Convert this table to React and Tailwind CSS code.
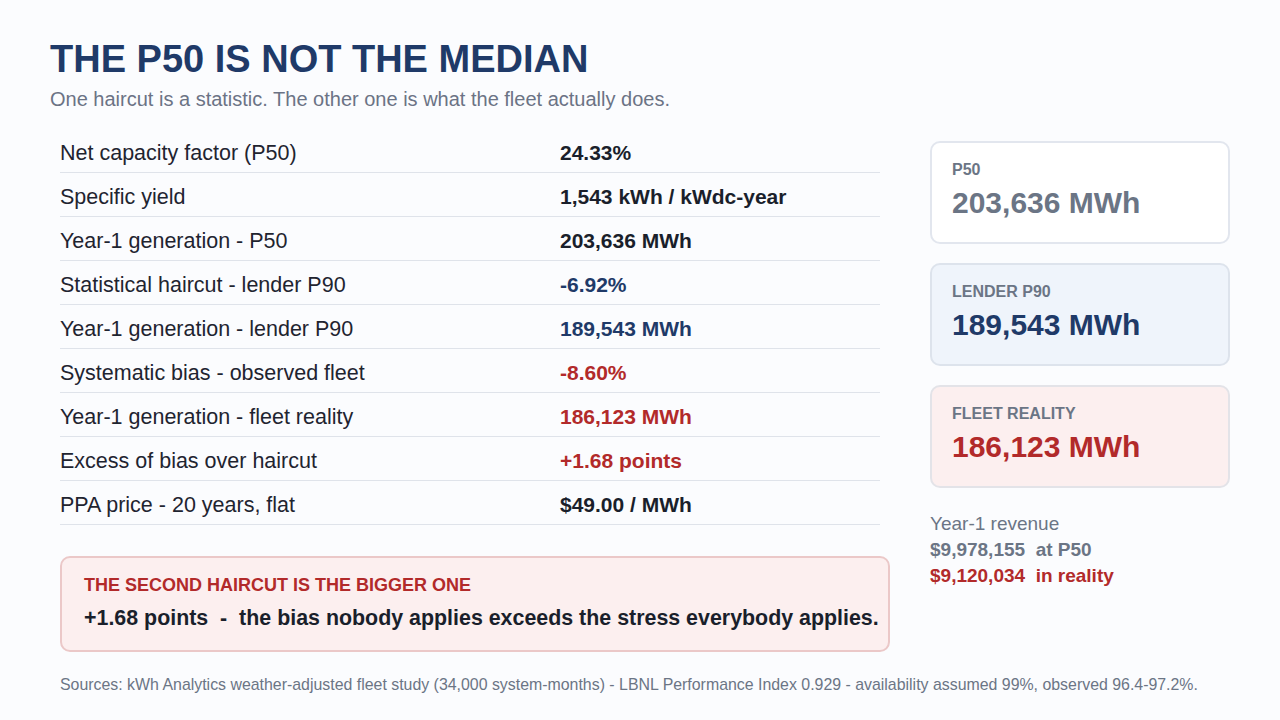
import React from 'react';

const rows = [
  { label: 'Net capacity factor (P50)', value: '24.33%', tone: 'dark' },
  { label: 'Specific yield', value: '1,543 kWh / kWdc-year', tone: 'dark' },
  { label: 'Year-1 generation - P50', value: '203,636 MWh', tone: 'dark' },
  { label: 'Statistical haircut - lender P90', value: '-6.92%', tone: 'navy' },
  { label: 'Year-1 generation - lender P90', value: '189,543 MWh', tone: 'navy' },
  { label: 'Systematic bias - observed fleet', value: '-8.60%', tone: 'red' },
  { label: 'Year-1 generation - fleet reality', value: '186,123 MWh', tone: 'red' },
  { label: 'Excess of bias over haircut', value: '+1.68 points', tone: 'red' },
  { label: 'PPA price - 20 years, flat', value: '$49.00 / MWh', tone: 'dark' },
];

const toneClass = {
  dark: 'text-[#1a1f2b]',
  navy: 'text-[#1f3a68]',
  red: 'text-[#b22a2a]',
};

const cards = [
  { label: 'P50', value: '203,636 MWh', box: 'bg-white border-[#e2e6ee]', text: 'text-[#6b7585]' },
  { label: 'LENDER P90', value: '189,543 MWh', box: 'bg-[#eff4fb] border-[#dde3ec]', text: 'text-[#1f3a68]' },
  { label: 'FLEET REALITY', value: '186,123 MWh', box: 'bg-[#fcefef] border-[#e3e3e8]', text: 'text-[#b22a2a]' },
];

export default function App() {
  return (
    <div
      className="w-[1280px] h-[720px] bg-[#fbfcfe] px-[50px] pt-[36px] overflow-hidden"
      style={{ fontFamily: '"Liberation Sans", Arial, sans-serif' }}
    >
      {/* Header */}
      <h1 className="text-[38px] leading-[46px] font-bold text-[#1f3a68]">THE P50 IS NOT THE MEDIAN</h1>
      <p className="text-[20px] leading-[26px] text-[#6b7385] mt-[4px]">
        One haircut is a statistic. The other one is what the fleet actually does.
      </p>

      <div className="flex gap-[40px] pl-[10px] mt-[17px]">
        {/* Left column: figures table + callout */}
        <div className="w-[830px] flex flex-col">
          <div className="w-[820px]">
            {rows.map((r) => (
              <div key={r.label} className="flex items-center h-[44px] pt-[4px] border-b border-[#dfe3ea] leading-[26px]">
                <div className="w-[500px] text-[21.5px] text-[#1f2430]">{r.label}</div>
                <div className={`text-[21px] font-bold ${toneClass[r.tone]}`}>{r.value}</div>
              </div>
            ))}
          </div>

          <div className="mt-[31px] w-[830px] h-[96px] rounded-[10px] border-2 border-[#ebc8c8] bg-[#fcefef] px-[22px] pt-[16px]">
            <div className="text-[18px] leading-[22px] font-bold text-[#b22a2a]">THE SECOND HAIRCUT IS THE BIGGER ONE</div>
            <div className="mt-[10px] text-[21.4px] leading-[24px] font-bold text-[#1a1f2b] whitespace-pre">
              {'+1.68 points  -  the bias nobody applies exceeds the stress everybody applies.'}
            </div>
          </div>
        </div>

        {/* Right column: scenario cards + revenue */}
        <div className="w-[300px] flex flex-col gap-[19px] pt-[12px]">
          {cards.map((c) => (
            <div key={c.label} className={`h-[103px] rounded-[10px] border-2 px-[20px] pt-[17px] ${c.box}`}>
              <div className="text-[16px] leading-[20px] font-bold text-[#6b7585]">{c.label}</div>
              <div className={`mt-[6px] text-[30px] leading-[34px] font-bold ${c.text}`}>{c.value}</div>
            </div>
          ))}

          <div className="mt-[4px] text-[19px] leading-[26px]">
            <div className="text-[#6b7585]">Year-1 revenue</div>
            <div className="font-bold text-[#6b7585] whitespace-pre">{'$9,978,155  at P50'}</div>
            <div className="font-bold text-[#b22a2a] whitespace-pre">{'$9,120,034  in reality'}</div>
          </div>
        </div>
      </div>

      <div className="pl-[10px] mt-[23px] text-[15.9px] leading-[20px] text-[#6b7585]">
        Sources: kWh Analytics weather-adjusted fleet study (34,000 system-months) - LBNL Performance Index 0.929 - availability assumed 99%, observed 96.4-97.2%.
      </div>
    </div>
  );
}
